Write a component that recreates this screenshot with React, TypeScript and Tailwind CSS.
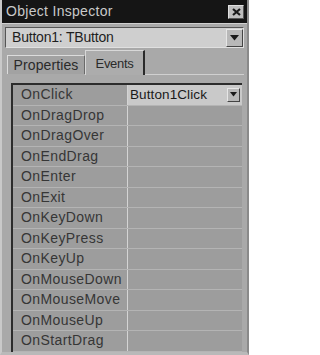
import React from "react";

const events = [
  "OnClick",
  "OnDragDrop",
  "OnDragOver",
  "OnEndDrag",
  "OnEnter",
  "OnExit",
  "OnKeyDown",
  "OnKeyPress",
  "OnKeyUp",
  "OnMouseDown",
  "OnMouseMove",
  "OnMouseUp",
  "OnStartDrag",
];

function DownArrow() {
  return (
    <svg width="9" height="6" viewBox="0 0 9 6">
      <path d="M0 0h9L4.5 5.5z" fill="#1a1a1a" />
    </svg>
  );
}

export default function App() {
  return (
    <div
      className="flex h-[355px] w-[249px] flex-col overflow-hidden border-l-2 border-r-2 border-b-[3px] border-l-[#c9c9c9] border-r-[#8a8a8a] border-b-[#b9b9b9] bg-[#a9a9a9] text-[#2a2a2a]"
      style={{ fontFamily: '"Liberation Sans", Arial, sans-serif' }}
    >
      {/* title bar */}
      <div className="flex h-[23px] shrink-0 items-center justify-between bg-[#151515] pl-[4px] pr-[3px]">
        <span className="text-[14px] tracking-[0.3px] text-[#c9c9c9]">Object Inspector</span>
        <div className="flex h-[14px] w-[16px] items-center justify-center border border-t-[#e0e0e0] border-l-[#e0e0e0] border-r-[#555] border-b-[#555] bg-[#bdbdbd]">
          <svg width="9" height="8" viewBox="0 0 9 8">
            <path d="M1 1l7 6M8 1L1 7" stroke="#1a1a1a" strokeWidth="2.2" />
          </svg>
        </div>
      </div>
      <div className="h-px shrink-0 bg-[#d0d0d0]" />

      <div className="flex flex-1 flex-col px-[3px]">
        {/* combo */}
        <div className="mt-[3px] flex h-[21px] shrink-0 items-center border border-t-[#555] border-l-[#555] border-r-[#e0e0e0] border-b-[#e0e0e0] bg-[#cfcfcf]">
          <span className="flex-1 pl-[6px] text-[14px] tracking-[-0.2px] text-[#1e1e1e]">Button1: TButton</span>
          <div className="flex h-[18px] w-[17px] items-center justify-center border border-t-[#e6e6e6] border-l-[#e6e6e6] border-r-[#444] border-b-[#444] bg-[#b8b8b8]">
            <DownArrow />
          </div>
        </div>

        {/* tabs */}
        <div className="mt-[2px] flex h-[25px] shrink-0 items-end">
          <div className="mb-[1px] ml-[2px] flex h-[19px] w-[78px] items-center justify-center border border-b-0 border-t-[#dcdcdc] border-l-[#dcdcdc] border-r-[#6a6a6a] bg-[#a2a2a2] text-[14px] tracking-[0.1px]">
            Properties
          </div>
          <div className="flex h-[25px] w-[60px] items-start justify-center border-t border-l border-r-2 border-t-[#d8d8d8] border-l-[#d8d8d8] border-r-[#2a2a2a] bg-[#acacac] pt-[3px] text-[13px] tracking-[-0.3px]">
            Events
          </div>
          <div className="h-px flex-1 bg-[#d0d0d0]" />
        </div>

        {/* grid */}
        <div className="mt-[8px] ml-[6px] mr-[2px] flex flex-col border-t-2 border-l-2 border-t-[#2c2c2c] border-l-[#2c2c2c] bg-[#9d9d9d]">
          {events.map((name, i) => (
            <div key={name} className="flex h-[20.5px] border-b border-b-[#b4b4b4]">
              <div className="flex w-[114px] shrink-0 items-center pl-[8px] text-[14px] tracking-[0.4px] text-[#363636]">
                {name}
              </div>
              <div className="w-px bg-[#d4d4d4]" />
              {i === 0 ? (
                <div className="flex flex-1 items-center bg-[#c9c9c9] pl-[2px]">
                  <span className="flex-1 text-[13.5px] tracking-[0.1px] text-[#1a1a1a]">Button1Click</span>
                  <div className="mr-[2px] flex h-[14px] w-[13px] items-center justify-center border border-t-[#e6e6e6] border-l-[#e6e6e6] border-r-[#444] border-b-[#444] bg-[#b8b8b8]">
                    <svg width="7" height="5" viewBox="0 0 7 5">
                      <path d="M0 0h7L3.5 4.5z" fill="#1a1a1a" />
                    </svg>
                  </div>
                </div>
              ) : (
                <div className="flex-1" />
              )}
            </div>
          ))}
        </div>
      </div>
    </div>
  );
}
